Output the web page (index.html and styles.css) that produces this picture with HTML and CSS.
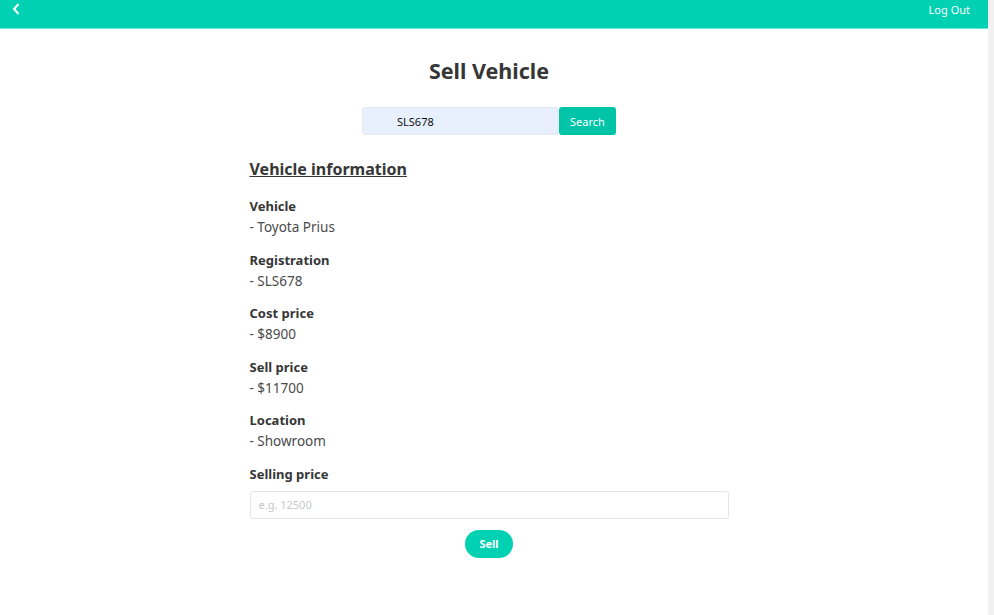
FILE: index.html
```html
<!DOCTYPE html>
<html>
<head>
<meta charset="utf-8">
<link rel="stylesheet" href="styles.css">
</head>
<body>
<div class="page">
  <div class="main">
    <nav class="navbar">
      <a class="back" href="#">
        <svg width="8" height="12" viewBox="0 0 8 12"><path d="M6.5 1 L2 6 L6.5 11" fill="none" stroke="#fff" stroke-width="2"/></svg>
      </a>
      <a class="logout" href="#">Log Out</a>
    </nav>
    <section class="content">
      <h1 class="title">Sell Vehicle</h1>
      <form class="search">
        <input class="search-input" type="text" value="SLS678">
        <button class="search-btn" type="button">Search</button>
      </form>
      <div class="info">
        <h2 class="info-title">Vehicle information</h2>
        <div class="field"><div class="label">Vehicle</div><div class="value">- Toyota Prius</div></div>
        <div class="field"><div class="label">Registration</div><div class="value">- SLS678</div></div>
        <div class="field"><div class="label">Cost price</div><div class="value">- $8900</div></div>
        <div class="field"><div class="label">Sell price</div><div class="value">- $11700</div></div>
        <div class="field"><div class="label">Location</div><div class="value">- Showroom</div></div>
        <div class="field field-last"><div class="label">Selling price</div></div>
        <input class="price-input" type="text" placeholder="e.g. 12500">
        <div class="actions"><button class="sell-btn" type="button">Sell</button></div>
      </div>
    </section>
  </div>
  <div class="scrollbar"></div>
</div>
</body>
</html>
```
FILE: styles.css
```css
html, body {
  margin: 0;
  padding: 0;
  background: #fff;
}
body {
  font-family: "Noto Sans", "Open Sans", sans-serif;
  color: #4a4a4a;
}
.page {
  display: flex;
  height: 615px;
}
.main {
  flex: 1;
}
.scrollbar {
  width: 6px;
  background: #f1f1f1;
}
.navbar {
  height: 28px;
  background: #00d1b2;
  border-bottom: 1px solid #6ae6d2;
  display: flex;
  align-items: center;
  justify-content: space-between;
  padding: 0 18px 0 12px;
}
.back {
  display: flex;
  margin-top: -10px;
}
.logout {
  color: #fff;
  text-decoration: none;
  font-size: 11px;
  margin-top: -10px;
}
.content {
  display: flex;
  flex-direction: column;
  align-items: center;
  padding-right: 10px;
}
.title {
  margin: 28px 0 0;
  font-size: 21.5px;
  font-weight: 700;
  color: #363636;
  line-height: 28px;
}
.search {
  display: flex;
  margin-top: 22px;
}
.search-input {
  width: 196px;
  height: 28px;
  box-sizing: border-box;
  border: 1px solid #e4e8f0;
  border-radius: 3px 0 0 3px;
  background: #e8f0fe;
  padding: 0 0 0 34px;
  font-family: inherit;
  font-size: 11px;
  color: #111;
  outline: none;
}
.search-btn {
  width: 57px;
  height: 28px;
  border: none;
  border-radius: 3px;
  background: #00c4a7;
  color: #fff;
  font-family: inherit;
  font-size: 11px;
  margin-left: 1px;
  padding: 0;
}
.info {
  width: 479px;
  margin-top: 21px;
}
.info-title {
  margin: 0 0 14px;
  font-size: 16px;
  font-weight: 700;
  color: #363636;
  text-decoration: underline;
  line-height: 26px;
}
.field {
  margin-bottom: 11.6px;
}
.field-last {
  margin-bottom: 7px;
}
.label {
  font-size: 13px;
  font-weight: 700;
  color: #363636;
  line-height: 20px;
}
.value {
  font-size: 13.5px;
  color: #4a4a4a;
  line-height: 22px;
}
.price-input {
  display: block;
  width: 100%;
  height: 28px;
  box-sizing: border-box;
  border: 1px solid #e6e6e6;
  border-radius: 3px;
  padding: 0 8px;
  font-family: inherit;
  font-size: 11px;
  margin-top: 4px;
  outline: none;
}
.price-input::placeholder {
  color: #c8c8c8;
}
.actions {
  display: flex;
  justify-content: center;
  margin-top: 11px;
}
.sell-btn {
  width: 48px;
  height: 28px;
  border: none;
  border-radius: 14px;
  background: #00d1b2;
  color: #fff;
  font-family: inherit;
  font-weight: 700;
  font-size: 11px;
  padding: 0;
}
```
